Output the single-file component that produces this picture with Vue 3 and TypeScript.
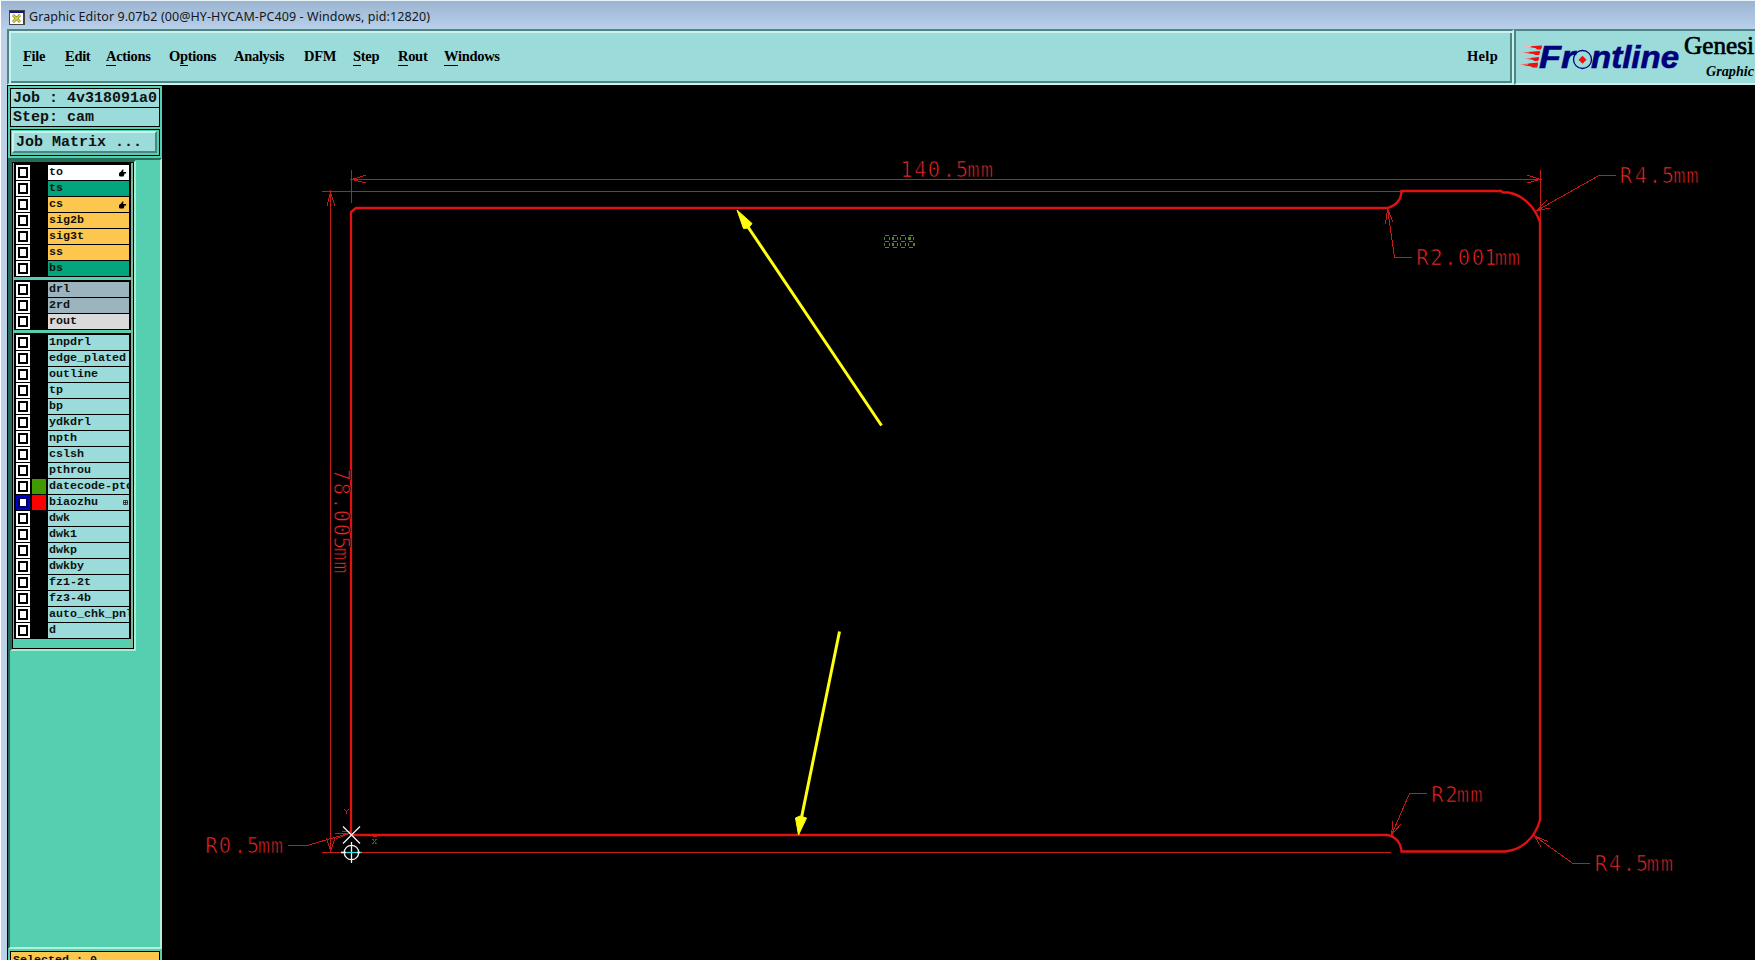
<script setup lang="ts">
interface MenuItem { pre: string; key: string; post: string; width: number }
interface Layer { name: string; bg: string; swatch?: string; hand?: boolean; active?: boolean }
interface Label { chars: string; x: number[]; y: number }

const menu: MenuItem[] = [
  { pre: '', key: 'F', post: 'ile', width: 42 },
  { pre: '', key: 'E', post: 'dit', width: 41 },
  { pre: '', key: 'A', post: 'ctions', width: 63 },
  { pre: 'O', key: 'p', post: 'tions', width: 65 },
  { pre: 'Analysis', key: '', post: '', width: 70 },
  { pre: 'DFM', key: '', post: '', width: 49 },
  { pre: '', key: 'S', post: 'tep', width: 45 },
  { pre: '', key: 'R', post: 'out', width: 46 },
  { pre: '', key: 'W', post: 'indows', width: 60 },
]

const aqua = '#9bdbda'
const plain = (name: string): Layer => ({ name, bg: aqua })
const groups: Layer[][] = [
  [
    { name: 'to', bg: '#ffffff', hand: true },
    { name: 'ts', bg: '#02a57c' },
    { name: 'cs', bg: '#fdc74e', hand: true },
    { name: 'sig2b', bg: '#fdc74e' },
    { name: 'sig3t', bg: '#fdc74e' },
    { name: 'ss', bg: '#fdc74e' },
    { name: 'bs', bg: '#02a57c' },
  ],
  [
    { name: 'drl', bg: '#9bb4bd' },
    { name: '2rd', bg: '#9bb4bd' },
    { name: 'rout', bg: '#dadada' },
  ],
  [
    ...['1npdrl', 'edge_plated', 'outline', 'tp', 'bp', 'ydkdrl', 'npth', 'cslsh', 'pthrou'].map(plain),
    { name: 'datecode-ptc', bg: aqua, swatch: '#3f9b00' },
    { name: 'biaozhu', bg: aqua, swatch: '#ff0000', active: true },
    ...['dwk', 'dwk1', 'dwkp', 'dwkby', 'fz1-2t', 'fz3-4b', 'auto_chk_pnl', 'd'].map(plain),
  ],
]

const labels: Label[] = [
  { chars: '140.5mm', x: [906.5, 920.5, 934, 949, 962, 973.5, 987], y: 176.5 },
  { chars: 'R4.5mm', x: [1626, 1641, 1655, 1668, 1679.5, 1692.5], y: 182.5 },
  { chars: 'R2.001mm', x: [1422.5, 1436.5, 1450.5, 1464, 1478, 1490.5, 1501, 1514], y: 264.5 },
  { chars: 'R0.5mm', x: [211.5, 225, 240, 253, 264, 277], y: 852.5 },
  { chars: 'R2mm', x: [1437.5, 1451.5, 1463, 1476.5], y: 801.5 },
  { chars: 'R4.5mm', x: [1601, 1615, 1629, 1642, 1653, 1667], y: 870.5 },
]
const sideLabel: Label = { chars: '78.005mm', x: [475, 489, 503.5, 516, 530, 543, 554, 567.5], y: -333.5 }

const digits = [884, 892, 900, 908]
</script>

<template>
  <div class="window">
    <header class="titlebar">
      <svg class="app-icon" width="16" height="15" viewBox="0 0 16 15">
        <rect width="16" height="15" fill="#444" />
        <rect x="1" y="1" width="14" height="2" fill="#14148c" />
        <rect x="1" y="3" width="13" height="11" fill="#fff" />
        <path d="M4 5L11 12M11 5L4 12" stroke="#6d6c12" stroke-width="2.6" />
        <path d="M4 5L11 12M11 5L4 12" stroke="#dede30" stroke-width="1.6" />
      </svg>
      <span class="title">Graphic Editor 9.07b2 (00@HY-HYCAM-PC409 - Windows, pid:12820)</span>
    </header>

    <div class="client">
      <div class="top">
        <nav class="menubar">
          <span v-for="m in menu" :key="m.pre + m.key + m.post" class="menu" :style="{ width: m.width + 'px' }">{{ m.pre }}<span v-if="m.key" class="mn">{{ m.key }}</span>{{ m.post }}</span>
          <span class="help">Help</span>
        </nav>
        <div class="brand">
          <svg width="239" height="52" viewBox="1516 30.500 239 52">
            <g fill="#ee1111">
              <path d="M1526 46l16-1-1.200 3.500zM1522 52l18-1.500-1 3.700zM1525 58l14-1.500-1 3.700zM1520 64l18-2-1 5z" />
              <path d="M1534 45.500h8l-1 3.500h-4zM1532 51.500h8l-1 3h-4zM1532 57.500h7l-1 3h-4zM1530 63h8l-1 4h-5z" />
            </g>
            <g stroke="#f3b4b4" stroke-width="1">
              <path d="M1523 46h8M1520 51.500h9M1523 57.500h8M1520 63.500h8" />
            </g>
            <g class="logo">
              <text x="1539" y="67" textLength="36" lengthAdjust="spacingAndGlyphs">Fr</text>
              <text x="1591" y="67" textLength="88" lengthAdjust="spacingAndGlyphs">ntline</text>
            </g>
            <circle cx="1582.500" cy="59" r="9" fill="none" stroke="#00007b" stroke-width="1.300" />
            <path d="M1582.500 55.200l4 4-4 4-4-4z" fill="#f01010" />
            <text class="product" x="1684" y="53.500" textLength="70" lengthAdjust="spacingAndGlyphs">Genesi</text>
            <text class="sub" x="1706" y="75" textLength="48" lengthAdjust="spacingAndGlyphs">Graphic</text>
          </svg>
        </div>
      </div>

      <div class="main">
        <aside class="side">
          <div class="info">
            <div class="field">Job : 4v318091a0</div>
            <div class="field second">Step: cam</div>
            <div class="btn-wrap"><button class="btn">Job Matrix ...</button></div>
          </div>
          <div class="scroll">
            <div class="list">
              <div v-for="(g, gi) in groups" :key="gi" class="group">
                <div v-for="l in g" :key="l.name" class="row">
                  <span class="check" :class="{ on: l.active }"><i></i></span>
                  <span class="swatch" :style="{ background: l.swatch ?? '#000' }"></span>
                  <span class="name" :style="{ background: l.bg }">
                    {{ l.name }}
                    <svg v-if="l.hand" class="hand" width="8" height="8" viewBox="0 0 9 8"><path d="M4 0h1v1.500L4.500 3H8v1.500H6V6L5 8H1L0 7V4l2-1.500z" fill="#000" /></svg>
                    <svg v-if="l.active" class="grid" width="5" height="5" viewBox="0 0 5 5"><path d="M.5.500h4v4h-4zM2.500 0v5M0 2.500h5" fill="none" stroke="#222" stroke-width=".8" /></svg>
                  </span>
                </div>
              </div>
            </div>
          </div>
          <div class="status"><div class="selected">Selected : 0</div></div>
        </aside>

        <svg class="canvas" width="1593" height="874" viewBox="162 86 1593 874">
          <g class="thin">
            <path d="M351.500 170V203M1540.500 170V236M352 179.500H1540M322 191.500H1402M330.500 192V851M322 852.500H1391" />
            <path d="M366 175L352 179.500L366 183M1527 175L1540 179.500L1527 183M327 206L330.500 192L335 206M326.500 838L330.500 851L335 838" />
            <path d="M1616 175.500H1599L1537 210.500M1547 200L1537 210.500L1550 208" />
            <path d="M1412 257.500H1394.500L1387.500 209M1385.500 224L1387.500 209L1393 222" />
            <path d="M1427 793.500H1409.500L1391.500 835M1393 821L1391.500 835L1401 824" />
            <path d="M1590 863.500H1573L1534.500 836M1541 847L1534.500 836L1548 841.500" />
            <path d="M288 845.500H307L350 833M335 833L350 833L336 839M342 831L352 832" />
            <path d="M344.500 809l2 3 2-3M346.500 812v2M350.500 812v2M373 836.500h4M372.500 839l4 5M376.500 839l-4 5" />
          </g>
          <path class="outline" d="M351 835V212L356 208H1388C1396 205 1401 201 1401.500 191H1501L1503 192.500H1508C1524 195 1535 208 1540 222V820C1535 838 1522 850 1505 851.500H1401.500C1401 844 1396 836 1387 835Z" />
          <g class="cad">
            <text v-for="(l, i) in labels" :key="i" :x="l.x.join(' ')" :y="l.y">{{ l.chars }}</text>
            <text transform="rotate(90)" :x="sideLabel.x.join(' ')" :y="sideLabel.y">{{ sideLabel.chars }}</text>
          </g>
          <g class="seg">
            <path v-for="d in digits" :key="d" :d="`M${d + 1} 235.500h4M${d + 1} 241.500h4M${d + 1} 247.500h4M${d + .5} 237v3M${d + 5.5} 237v3M${d + .5} 243v3M${d + 5.5} 243v3`" />
            <path class="fat" d="M893 237v3M893 243v3M910 237v3M914 243v3" />
          </g>
          <g class="arrows">
            <path d="M881.500 425.500L746 224M839.500 631.500L801 820" />
            <path class="head" d="M737 210L752 223.500L748.500 228L743.500 228.500ZM798.500 835L795.500 818L800 816L806.500 818Z" />
          </g>
          <g class="marks">
            <path d="M343 826.500L360 843.500M360 826.500L343 843.500M351.500 842V863" />
            <circle cx="351.500" cy="852.500" r="7.200" />
            <path class="cyan" d="M341 852.500H362" />
            <path d="M341 852.500H346M357 852.500H360" />
          </g>
        </svg>
      </div>
    </div>
  </div>
</template>

<style>
html, body { margin: 0; background: #000; overflow: hidden; }
</style>

<style scoped>
* { box-sizing: border-box; }
.window { width: 1755px; height: 960px; overflow: hidden; background: #bdd1e9; border-left: 1px solid #fff; border-top: 1px solid #e8f4fa; display: flex; flex-direction: column; }
.titlebar { height: 28px; flex: none; padding: 1px 0 0 8px; display: flex; align-items: center; background: linear-gradient(#9bb4d0, #b8d0ea); }
.app-icon { flex: none; margin-top: 3px; }
.title { font: 12.5px "Noto Sans", sans-serif; color: #101820; margin-left: 4px; margin-top: 2px; white-space: nowrap; letter-spacing: 0.08px; }
.client { margin-left: 6px; flex: none; width: 1748px; }
.top { display: flex; height: 56px; background: #9bdbda; }
.menubar { width: 1507px; flex: none; height: 56px; border: 2px solid #4d8583; border-right-color: #c9f1ee; border-bottom-color: #c9f1ee; display: flex; align-items: center; padding: 0 0 1px 14px; font: bold 14.5px "Liberation Serif", serif; color: #000; box-shadow: inset 2px 2px #c9f1ee, inset -2px -2px #4d8583; }
.menu { flex: none; white-space: nowrap; letter-spacing: -0.3px; }
.help { letter-spacing: 0.3px; margin-left: auto; margin-right: 14px; }
.mn { border-bottom: 1px solid #000; padding-bottom: 1px; }
.brand { width: 241px; height: 56px; flex: none; border: 2px solid #4d8583; border-right: 0; border-bottom-color: #c9f1ee; overflow: hidden; }
.brand svg { display: block; }
.logo text { font: italic bold 31px "Liberation Sans", sans-serif; fill: #00007b; stroke: #00007b; stroke-width: .6px; }
.product { font: 26px "Liberation Serif", serif; stroke: #000; stroke-width: .7px; }
.sub { font: italic bold 15px "Liberation Serif", serif; }
.main { display: flex; height: 875px; background: #000; }
.side { width: 155px; height: 875px; flex: none; border-left: 1px solid #000; background: #54cfb0; display: flex; flex-direction: column; }
.info { height: 73px; flex: none; border-top: 1px solid #000; padding: 2px 2px 0; }
.field { height: 20px; border: 1px solid #000; background: #9bdbda; font: bold 15px/19px "Liberation Mono", monospace; padding-left: 2px; white-space: pre; color: #111; }
.second { margin-top: -1px; }
.btn-wrap { margin-top: 2px; height: 27px; border: 1px solid #000; padding: 1px 2px 2px 1px; }
.btn { display: block; width: 145px; height: 22px; border: 2px solid #c9f1ee; border-right-color: #4d8583; border-bottom-color: #4d8583; background: #9bdbda; font: bold 15px/20px "Liberation Mono", monospace; padding: 0 0 0 2px; text-align: left; white-space: pre; color: #111; }
.scroll { height: 791px; flex: none; border: 2px solid #276b5b; border-right-color: #b3f0da; border-bottom-color: #b3f0da; }
.list { width: 126px; height: 491px; border: 2px solid #276b5b; border-right-color: #a9ecd5; border-bottom-color: #a9ecd5; box-shadow: inset 1px 1px #000, inset -1px -1px #000, inset -4px 0 #7cb99d; padding: 1px 0 0 2px; display: flex; flex-direction: column; gap: 3px; }
.group { width: 117px; background: #000; padding: 2px 2px 1px; display: flex; flex-direction: column; gap: 1px; }
.row { height: 15px; display: flex; }
.check { width: 14px; height: 15px; background: #fff; display: flex; align-items: center; justify-content: center; }
.check i { width: 10px; height: 11px; border: 2px solid #000; background: #fff; }
.check.on { background: #0000c8; }
.check.on i { border-color: #00005a; }
.swatch { width: 14px; height: 15px; margin: 0 2px; }
.name { position: relative; width: 81px; height: 15px; overflow: hidden; font: bold 11.67px/15px "Liberation Mono", monospace; padding-left: 1px; white-space: nowrap; color: #111; }
.hand { position: absolute; right: 2px; top: 4px; }
.grid { position: absolute; right: 1px; top: 5px; }
.status { padding: 2px 2px 0; }
.selected { height: 20px; border: 1px solid #000; background: #fdc74e; font: bold 11.67px/15px "Liberation Mono", monospace; padding: 1px 0 0 2px; color: #111; white-space: pre; }
.canvas { flex: none; display: block; margin-top: 1px; background: #000; }
.thin { fill: none; stroke: #c41a1a; stroke-width: 1; shape-rendering: crispEdges; }
.outline { fill: none; stroke: #e21212; stroke-width: 2.3; }
.cad text { font: 20.5px "DejaVu Sans Mono", monospace; fill: #f42626; stroke: #000; stroke-width: .7px; text-anchor: middle; }
.seg path { fill: none; stroke: #4f8c18; stroke-width: 1; shape-rendering: crispEdges; }
.seg .fat { stroke-width: 2; }
.arrows { fill: #ffff10; stroke: #ffff10; stroke-width: 3; }
.arrows .head { stroke-width: 1; }
.marks { fill: none; stroke: #f4f4f4; stroke-width: 1.300; }
.marks .cyan { stroke: #30d8d8; }
</style>
